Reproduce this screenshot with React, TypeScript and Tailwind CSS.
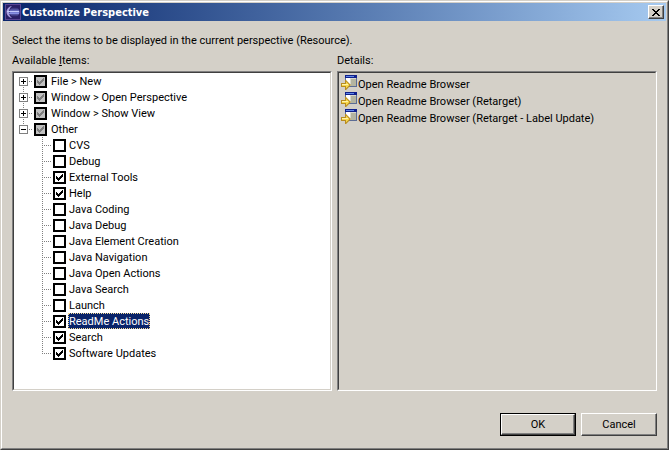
import { useState } from 'react';
import clsx from 'clsx';

interface TreeItem {
  id: string;
  label: string;
  checked: boolean;
}

const groups = ['File > New', 'Window > Open Perspective', 'Window > Show View', 'Other'];

const initialItems: TreeItem[] = [
  { id: 'cvs', label: 'CVS', checked: false },
  { id: 'debug', label: 'Debug', checked: false },
  { id: 'external-tools', label: 'External Tools', checked: true },
  { id: 'help', label: 'Help', checked: true },
  { id: 'java-coding', label: 'Java Coding', checked: false },
  { id: 'java-debug', label: 'Java Debug', checked: false },
  { id: 'java-element', label: 'Java Element Creation', checked: false },
  { id: 'java-navigation', label: 'Java Navigation', checked: false },
  { id: 'java-open', label: 'Java Open Actions', checked: false },
  { id: 'java-search', label: 'Java Search', checked: false },
  { id: 'launch', label: 'Launch', checked: false },
  { id: 'readme', label: 'ReadMe Actions', checked: true },
  { id: 'search', label: 'Search', checked: true },
  { id: 'updates', label: 'Software Updates', checked: true },
];

const details = [
  'Open Readme Browser',
  'Open Readme Browser (Retarget)',
  'Open Readme Browser (Retarget - Label Update)',
];

const panelStyle =
  'min-h-40 flex-1 border border-t-[#808080] border-l-[#808080] border-r-white border-b-white';
const panelInnerStyle =
  'h-full border border-t-[#404040] border-l-[#404040] border-r-[#d4d0c8] border-b-[#d4d0c8]';
const raisedStyle =
  'border border-t-white border-l-white border-r-[#404040] border-b-[#404040] shadow-[inset_-1px_-1px_0_#808080]';

const EclipseIcon = () => (
  <svg width="16" height="16" viewBox="0 0 16 16" className="shrink-0">
    <defs>
      <linearGradient id="eclipse" x1="0" y1="0" x2="0" y2="1">
        <stop offset="0" stopColor="#241a5c" />
        <stop offset="0.5" stopColor="#8088e0" />
        <stop offset="1" stopColor="#241a5c" />
      </linearGradient>
    </defs>
    <rect x="0.5" y="0.5" width="15" height="15" fill="#2a1f66" stroke="#5a4594" />
    <path d="M7 2C3.5 2.5 1.5 5.500 1.5 8s2 5.5 5.5 6C5 12.5 4 10.5 4 8s1-4.5 3-6z" fill="#a89ce0" />
    <circle cx="9.5" cy="8" r="5" fill="url(#eclipse)" />
    <path d="M2 7.5h12" stroke="#c4c8fa" />
    <path d="M4 9.5h10" stroke="#8890e4" />
  </svg>
);

const ReadmeIcon = () => (
  <svg width="16" height="16" viewBox="0 0 16 16" className="shrink-0">
    <rect x="4" y="0" width="12" height="12" fill="#5c6c94" />
    <rect x="5" y="3" width="4" height="8" fill="#ffffff" />
    <rect x="9" y="3" width="6" height="8" fill="#d8d8cc" />
    <rect x="10" y="4" width="5" height="7" fill="#b4b4a0" />
    <rect x="4" y="0" width="12" height="3" fill="#10208c" />
    <path d="M5 1.5h8" stroke="#6088e8" />
    <path d="M0 8h4v-3h1l5 5l-5 5h-1v-3h-4z" fill="#b88c20" />
    <path d="M1 9h4v-2.5l3.5 3.5l-3.5 3.5v-2.5h-4z" fill="#f8d84c" />
    <path d="M1 9.5h6" stroke="#fff4a8" />
  </svg>
);

interface CheckBoxProps {
  id: string;
  checked: boolean;
  mixed?: boolean;
  onChange?: () => void;
}

const CheckBox = ({ id, checked, mixed, onChange }: CheckBoxProps) => (
  <span className="relative size-[13px] shrink-0">
    <input
      id={id}
      type="checkbox"
      checked={checked}
      onChange={() => onChange?.()}
      className={clsx(
        'block size-[13px] appearance-none border-2 border-black',
        mixed ? 'bg-[#c0c0c0]' : 'bg-white',
      )}
    />
    {checked && (
      <svg
        width="7"
        height="7"
        viewBox="0 0 7 7"
        shapeRendering="crispEdges"
        className={clsx('pointer-events-none absolute top-[3px] left-[3px]', mixed ? 'text-[#808080]' : 'text-black')}
      >
        <path
          d="M0 2h1v1h1v1h1v-1h1v-1h1v-1h1v-1h1v3h-1v1h-1v1h-1v1h-1v1h-1v-1h-1v-1h-1z"
          fill="currentColor"
        />
      </svg>
    )}
  </span>
);

const Expander = ({ open, first }: { open: boolean; first: boolean }) => (
  <svg width="15" height="16" viewBox="0 0 15 16" shapeRendering="crispEdges" className="shrink-0">
    {!first && <path d="M4.5 0v4" stroke="#808080" strokeDasharray="1 1" />}
    {!open && <path d="M4.5 14v2" stroke="#808080" strokeDasharray="1 1" />}
    <path d="M10 8.5h4" stroke="#808080" strokeDasharray="1 1" />
    <rect x="0.5" y="4.5" width="8" height="8" fill="#fff" stroke="#808080" />
    <path d="M2 8.5h5" stroke="#000" />
    {!open && <path d="M4.5 6v5" stroke="#000" />}
  </svg>
);

const Branch = ({ last }: { last: boolean }) => (
  <svg width="11" height="16" viewBox="0 0 11 16" shapeRendering="crispEdges" className="shrink-0">
    <path d={last ? 'M0.5 0v9' : 'M0.5 0v16'} stroke="#808080" strokeDasharray="1 1" />
    <path d="M2 8.5h8" stroke="#808080" strokeDasharray="1 1" />
  </svg>
);

const App = () => {
  const [items, setItems] = useState(initialItems);
  const [selected, setSelected] = useState('readme');

  const toggle = (id: string) => {
    setSelected(id);
    setItems(items.map((item) => (item.id === id ? { ...item, checked: !item.checked } : item)));
  };

  return (
    <div className="min-h-screen flex flex-col border border-t-[#d4d0c8] border-l-[#d4d0c8] border-r-[#404040] border-b-[#404040] bg-[#d4d0c8] font-['Roboto',sans-serif] text-[11px] leading-4 text-black">
      <div className="flex flex-1 flex-col border border-t-white border-l-white border-r-[#808080] border-b-[#808080] p-px">
        <header className="flex h-[18px] items-center gap-px bg-linear-to-r from-[#0a246a] to-[#a6caf0] px-0.5">
          <EclipseIcon />
          <h1 className="flex-1 pt-px font-['DejaVu_Sans_Condensed','DejaVu_Sans',sans-serif] font-bold text-white">
            Customize Perspective
          </h1>
          <button
            type="button"
            aria-label="Close"
            className={clsx('flex h-3.5 w-4 items-center justify-center bg-[#d4d0c8]', raisedStyle)}
          >
            <svg width="8" height="7" viewBox="0 0 8 7" shapeRendering="crispEdges">
              <path
                d="M0 0h2v1h1v1h2v-1h1v-1h2v1h-1v1h-1v1h-1v1h1v1h1v1h1v1h-2v-1h-1v-1h-2v1h-1v1h-2v-1h1v-1h1v-1h1v-1h-1v-1h-1v-1h-1z"
                fill="#000"
              />
            </svg>
          </button>
        </header>

        <main className="flex flex-1 flex-col px-[9px] pt-3 pb-[11px]">
          <p>Select the items to be displayed in the current perspective (Resource).</p>

          <div className="mt-1 grid flex-1 grid-cols-2 gap-[5px]">
            <section className="flex flex-col">
              <h2 className="mb-0.5">
                Available <u>I</u>tems:
              </h2>
              <div className={panelStyle}>
                <div className={clsx('bg-white pl-[5px]', panelInnerStyle)}>
                  <ul>
                    {groups.map((group, i) => (
                      <li key={group} className="flex h-4 items-center">
                        <Expander open={i === groups.length - 1} first={i === 0} />
                        <CheckBox id={group} checked mixed />
                        <label htmlFor={group} className="pt-0.5 pl-1 leading-3.5">{group}</label>
                      </li>
                    ))}
                  </ul>
                  <ul className="pl-[23px]">
                    {items.map((item, i) => (
                      <li key={item.id} className="flex h-4 items-center">
                        <Branch last={i === items.length - 1} />
                        <CheckBox id={item.id} checked={item.checked} onChange={() => toggle(item.id)} />
                        <label
                          htmlFor={item.id}
                          className={clsx(
                            'ml-0.5 flex h-4 items-center border border-dotted pt-0.5 leading-3.5',
                            selected === item.id
                              ? 'border-[#f5db95] bg-[#0a246a] text-white'
                              : 'border-transparent',
                          )}
                        >
                          {item.label}
                        </label>
                      </li>
                    ))}
                  </ul>
                </div>
              </div>
            </section>

            <section className="flex flex-col">
              <h2 className="mb-0.5">Details:</h2>
              <div className={panelStyle}>
                <ul className={clsx('pt-0.5 pl-0.5', panelInnerStyle)}>
                  {details.map((detail) => (
                    <li key={detail} className="flex h-[17px] items-start gap-px">
                      <ReadmeIcon />
                      <span className="pt-0.5">{detail}</span>
                    </li>
                  ))}
                </ul>
              </div>
            </section>
          </div>

          <footer className="mt-[22px] flex justify-end gap-[5px]">
            <button type="button" className="h-[23px] w-[76px] border border-black">
              <span className={clsx('flex h-full items-center justify-center', raisedStyle)}>OK</span>
            </button>
            <button type="button" className={clsx('h-[23px] w-[76px]', raisedStyle)}>
              Cancel
            </button>
          </footer>
        </main>
      </div>
    </div>
  );
};

export default App;
